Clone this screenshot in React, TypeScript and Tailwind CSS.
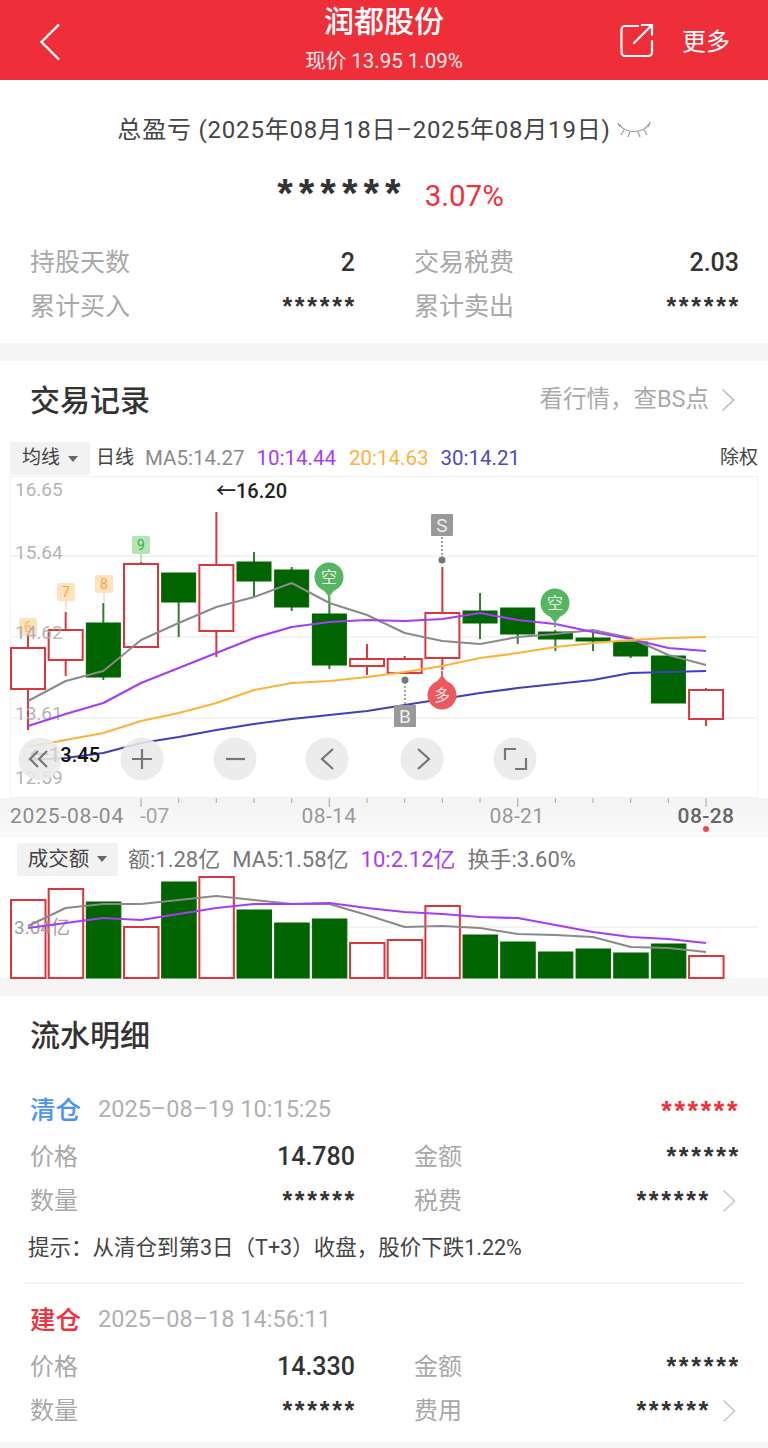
const FONT = { fontFamily: '"Roboto", "Noto Sans CJK SC", sans-serif' }

const RED = "#d9363e"
const GREEN = "#006400"

const candleX = (i: number) => 28 + 37.67 * i

// top, bottom, high, low, rising
const candles: [number, number, number, number, boolean][] = [
  [648, 689, 636, 730, true],
  [630, 660, 612, 676, true],
  [623, 677, 603, 680, false],
  [564, 647, 562, 648, true],
  [573, 602, 573, 637, false],
  [565, 631, 512, 657, true],
  [562, 581, 552, 597, false],
  [570, 607, 567, 611, false],
  [614, 665, 597, 669, false],
  [659, 666, 644, 675, true],
  [659, 673, 656, 673, true],
  [613, 658, 567, 670, true],
  [611, 623, 593, 639, false],
  [608, 634, 608, 644, false],
  [632, 639, 630, 651, false],
  [638, 641, 632, 651, false],
  [642, 656, 642, 658, false],
  [656, 703, 656, 703, false],
  [690, 719, 688, 726, true],
]

const ma5 = [701, 681, 671, 640, 623, 607, 597, 583, 603, 615, 633, 641, 644, 637, 634, 630, 638, 655, 665]
const ma10 = [726, 714, 703, 683, 668, 653, 638, 627, 622, 620, 621, 619, 613, 620, 624, 632, 639, 648, 651]
const ma20 = [747, 740, 733, 721, 713, 703, 690, 683, 681, 677, 672, 666, 658, 653, 647, 643, 640, 638, 637]
const ma30 = [760, 758, 753, 743, 737, 730, 724, 719, 715, 711, 705, 699, 693, 688, 684, 680, 673, 672, 671]

// top of each volume bar, rising days are hollow
const volumes: [number, boolean][] = [
  [899, true], [888, true], [901, false], [926, true], [881, false], [876, true], [909, false],
  [922, false], [918, false], [942, true], [939, true], [905, true], [934, false], [941, false],
  [951, false], [948, false], [952, false], [943, false], [955, true],
]
const volMa5 = [925, 907, 903, 903, 899, 895, 899, 903, 903, 914, 926, 925, 927, 933, 934, 936, 946, 947, 951]
const volMa10 = [927, 922, 917, 919, 913, 907, 903, 903, 902, 907, 911, 913, 916, 917, 924, 931, 936, 938, 942]

const toPoints = (ys: number[]) => ys.map((y, i) => `${candleX(i)},${y}`).join(" ")

function Stars({ className = "text-[#333] text-[25px] tracking-[2.7px]" }: { className?: string }) {
  return (
    <span className={`font-bold leading-none mr-[-2px] -translate-y-[1px] ${className}`} style={{ fontFamily: '"Liberation Sans", sans-serif' }}>
      ******
    </span>
  )
}

function Chevron({ color = "#c8c8c8" }: { color?: string }) {
  return (
    <svg width={14} height={24} viewBox="0 0 14 24" fill="none" stroke={color} strokeWidth={1.6}>
      <path d="M1.5 1.5 L12.5 12 L1.5 22.5" />
    </svg>
  )
}

function Row({ l1, v1, l2, v2, more, labelSize = "text-[25px]" }: { l1: string; v1: React.ReactNode; l2: string; v2: React.ReactNode; more?: boolean; labelSize?: string }) {
  return (
    <div className="grid grid-cols-[325px_325px] gap-x-[59px] h-[44px] items-center px-[30px]">
      <div className="flex items-center justify-between">
        <span className={`${labelSize} text-[#a8a8a8]`}>{l1}</span>
        <span className="text-[25px] font-medium text-[#333]">{v1}</span>
      </div>
      <div className="flex items-center justify-between">
        <span className={`${labelSize} text-[#a8a8a8]`}>{l2}</span>
        <span className="flex items-center">
          <span className="text-[25px] font-medium text-[#333] flex items-center">{v2}</span>
          {more && (
            <span className="ml-[13px] mr-[3px] flex">
              <Chevron />
            </span>
          )}
        </span>
      </div>
    </div>
  )
}

function Tag({ x, y, label, bg, fg }: { x: number; y: number; label: string; bg: string; fg: string }) {
  return (
    <g>
      <line x1={x} x2={x} y1={y + 8} y2={y + 18} stroke={bg} strokeWidth={2} />
      <rect x={x - 9} y={y - 9} width={18} height={18} rx={2} fill={bg} />
      <text x={x} y={y + 5} fontSize={14} textAnchor="middle" fill={fg}>{label}</text>
    </g>
  )
}

function Pin({ x, y, label, bg, tail }: { x: number; y: number; label: string; bg: string; tail: "up" | "down" }) {
  const t = tail === "down" ? 1 : -1
  return (
    <g>
      <path d={`M${x - 7} ${y + t * 11} L${x} ${y + t * 20} L${x + 7} ${y + t * 11} Z`} fill={bg} />
      <line x1={x} x2={x} y1={y + t * 18} y2={y + t * 24} stroke={bg} strokeWidth={2} />
      <circle cx={x} cy={y} r={14.5} fill={bg} />
      <text x={x} y={y + 6} fontSize={16} textAnchor="middle" fill="#fff" fillOpacity={0.9}>{label}</text>
    </g>
  )
}

function Flag({ x, y, label, dotY }: { x: number; y: number; label: string; dotY: number }) {
  return (
    <g>
      <line x1={x} x2={x} y1={y} y2={dotY} stroke="#888" strokeWidth={1.5} strokeDasharray="2 2" />
      <circle cx={x} cy={dotY} r={3.5} fill="#777" />
      <rect x={x - 11} y={y - 11} width={22} height={22} rx={1} fill="#999" />
      <text x={x} y={y + 7} fontSize={19} textAnchor="middle" fill="#eee">{label}</text>
    </g>
  )
}

function KLineChart() {
  const round = "#e9e9e9"
  return (
    <svg width={748} height={322} viewBox="10 476 748 322" className="block" style={FONT}>
      <rect x={10.5} y={476.5} width={747} height={321} fill="#fff" stroke="#f2f2f2" />
      {[556, 637, 718].map((y) => (
        <line key={y} x1={10} x2={758} y1={y} y2={y} stroke="#f0f0f0" strokeWidth={1.5} />
      ))}

      <Tag x={28} y={627} label="6" bg="#fde3c0" fg="#fbb55d" />
      <Tag x={66} y={592} label="7" bg="#fde3c0" fg="#f9a341" />
      <Tag x={104} y={584} label="8" bg="#fde3c0" fg="#f9a341" />
      <Tag x={141} y={545} label="9" bg="#b5e4b9" fg="#3daf4a" />

      {candles.map(([top, bottom, high, low, up], i) => {
        const x = candleX(i)
        const color = up ? RED : GREEN
        return (
          <g key={i}>
            <line x1={x} x2={x} y1={high} y2={low} stroke={up ? RED : "#2f7d2f"} strokeWidth={2} />
            <rect
              x={x - 17}
              y={top}
              width={34}
              height={bottom - top}
              fill={up ? "#fff" : color}
              stroke={color}
              strokeWidth={up ? 2 : 1}
            />
          </g>
        )
      })}

      {/* price scale sits on top of the candles */}
      {[["16.65", 496], ["15.64", 559], ["14.62", 639], ["13.61", 720], ["12.59", 784]].map(([t, y]) => (
        <text key={t} x={15} y={y} fontSize={19} fill="#aaa" fillOpacity={0.9}>{t}</text>
      ))}

      <polyline points={toPoints(ma5)} fill="none" stroke="#8a8a8a" strokeWidth={2} strokeLinejoin="round" />
      <polyline points={toPoints(ma10)} fill="none" stroke="#a63df5" strokeWidth={2.2} strokeLinejoin="round" />
      <polyline points={toPoints(ma20)} fill="none" stroke="#fbb33c" strokeWidth={2.2} strokeLinejoin="round" />
      <polyline points={toPoints(ma30)} fill="none" stroke="#4040bd" strokeWidth={2.2} strokeLinejoin="round" />

      <Pin x={329} y={577} label="空" bg="#55b560" tail="down" />
      <Pin x={555} y={603} label="空" bg="#55b560" tail="down" />
      <Pin x={442} y={695} label="多" bg="#ec5a60" tail="up" />
      <Flag x={442} y={525} label="S" dotY={560} />
      <Flag x={405} y={716} label="B" dotY={680} />

      <text x={216} y={498} fontSize={20} fontWeight={500} fill="#222">←16.20</text>
      <text x={29} y={762} fontSize={20} fontWeight={500} fill="#111">←13.45</text>

      {[40, 142, 235, 327, 422, 515].map((x) => (
        <circle key={x} cx={x} cy={759} r={21.5} fill={round} fillOpacity={0.88} />
      ))}
      <g fill="none" stroke="#777" strokeWidth={2.2}>
        <path d="M38 751 L30 759 L38 767 M47 751 L39 759 L47 767" />
        <path d="M132 759 H152 M142 749 V769" />
        <path d="M226 759 H245" />
        <path d="M333 749 L322 759 L333 769" />
        <path d="M418 749 L429 759 L418 769" />
        <path d="M505 760 V749 H516 M526 758 V769 H515" />
      </g>
    </svg>
  )
}

function DateAxis() {
  return (
    <div className="h-[40px] bg-gradient-to-b from-[#f3f3f3] to-[#fbfbfb]">
      <svg width={768} height={40} viewBox="0 798 768 40" className="block" style={FONT}>
        {candles.slice(3).map((_, i) => {
          const long = i % 5 === 0
          const x = candleX(i + 3)
          return <line key={i} x1={x} x2={x} y1={798} y2={long ? 807 : 803} stroke="#b5b5b5" strokeWidth={1.2} />
        })}
        <text x={10} y={823} fontSize={21} fill="#8c8c8c" letterSpacing={0.8}>2025-08-04</text>
        <text x={140} y={823} fontSize={21} fill="#a6a6a6">-07</text>
        <text x={329} y={823} fontSize={21} fill="#999" textAnchor="middle" letterSpacing={0.4}>08-14</text>
        <text x={517} y={823} fontSize={21} fill="#999" textAnchor="middle" letterSpacing={0.4}>08-21</text>
        <text x={706} y={823} fontSize={21} fontWeight={500} fill="#666" textAnchor="middle" letterSpacing={0.4}>08-28</text>
        <circle cx={706} cy={829} r={3} fill="#f0474e" />
      </svg>
    </div>
  )
}

function VolumeChart() {
  return (
    <svg width={768} height={104} viewBox="0 875 768 104" className="block" style={FONT}>
      <line x1={10} x2={758} y1={926} y2={926} stroke="#f0f0f0" strokeWidth={1.5} />
      {volumes.map(([top, up], i) => (
        <rect
          key={i}
          x={candleX(i) - 17}
          y={top}
          width={34.5}
          height={977 - top}
          fill={up ? "#fff" : GREEN}
          stroke={up ? RED : GREEN}
          strokeWidth={up ? 2 : 1}
        />
      ))}
      <text x={14} y={933} fontSize={19} fill="#a0a0a0">3.04亿</text>
      <polyline points={toPoints(volMa5)} fill="none" stroke="#8a8a8a" strokeWidth={2} strokeLinejoin="round" />
      <polyline points={toPoints(volMa10)} fill="none" stroke="#a63df5" strokeWidth={2.2} strokeLinejoin="round" />
    </svg>
  )
}

function Caret() {
  return <span className="w-0 h-0 border-x-[5px] border-x-transparent border-t-[6px] border-t-[#666] ml-[8px]" />
}

export default function App() {
  return (
    <div className="w-[768px] h-[1448px] bg-[#f5f5f5] overflow-hidden" style={FONT}>
      {/* top bar */}
      <header className="h-[80px] bg-[#ee2f39] flex items-center justify-between text-white relative">
        <svg width={22} height={38} viewBox="0 0 22 38" fill="none" stroke="#fff" strokeWidth={2.4} className="ml-[39px] mt-[3px]">
          <path d="M20 1.5 L2.5 19 L20 36.5" />
        </svg>
        <div className="absolute left-0 right-0 top-0 flex flex-col items-center">
          <span className="text-[30px] leading-[40px] font-medium mt-[2px]">润都股份</span>
          <span className="text-[20.5px] leading-[28px] mt-[5px] opacity-90">现价 13.95 1.09%</span>
        </div>
        <div className="flex items-center mr-[38px] relative">
          <svg width={34} height={36} viewBox="0 0 34 36" fill="none" stroke="#fff" strokeWidth={2.2} strokeLinecap="round" className="mr-[28px] mt-[2px]">
            <path d="M18 3 H5 a3.5 3.5 0 0 0 -3.5 3.5 V29.5 a3.5 3.5 0 0 0 3.5 3.5 H28.5 a3.5 3.5 0 0 0 3.5 -3.5 V18" />
            <path d="M14 20 L31 3 M22 2 H32 V12" />
          </svg>
          <span className="text-[24px] mt-[3px]">更多</span>
        </div>
      </header>

      {/* profit summary */}
      <section className="h-[263px] bg-white pt-[32px]">
        <div className="flex items-center justify-center h-[36px] text-[24px] tracking-[0.8px] text-[#444]">
          <span>总盈亏 (2025年08月18日–2025年08月19日)</span>
          <svg width={34} height={18} viewBox="0 0 34 18" fill="none" stroke="#999" strokeWidth={1.2} className="ml-[6px]">
            <path d="M2 3 C8 13 26 13 32 3" />
            <path d="M7 9 L4 14 M13 11 L11 16 M21 11 L23 16 M27 9 L30 14 M31 6 L33 1 M3 6 L1 2" />
          </svg>
        </div>
        <div className="flex items-baseline justify-center mt-[24px] h-[48px] pl-[13px]">
          <span className="text-[40px] font-bold leading-none tracking-[6px] text-[#333] translate-y-[1px]" style={{ fontFamily: '"Liberation Sans", sans-serif' }}>
            ******
          </span>
          <span className="text-[29.5px] text-[#f0303a] ml-[18px]">3.07%</span>
        </div>
        <div className="mt-[21px]">
          <Row l1="持股天数" v1="2" l2="交易税费" v2="2.03" />
          <Row l1="累计买入" v1={<Stars />} l2="累计卖出" v2={<Stars />} />
        </div>
      </section>

      {/* trade record and chart */}
      <section className="mt-[18px] h-[617px] bg-white">
        <div className="h-[78px] mb-[2px] flex items-center justify-between pl-[30px] pr-[33px]">
          <h2 className="text-[30px] font-medium text-[#333]">交易记录</h2>
          <div className="flex items-center text-[23.5px] text-[#aaa]">
            <span>{"看行情\uFF0C查BS点"}</span>
            <span className="ml-[12px] flex">
              <Chevron color="#bbb" />
            </span>
          </div>
        </div>
        <div className="h-[35px] flex items-center ml-[10px] mr-[10px] text-[19px] text-[#444]">
          <div className="w-[80px] h-[33px] bg-[#f2f2f2] rounded-[2px] flex items-center justify-center">
            <span>均线</span>
            <Caret />
          </div>
          <span className="ml-[6px]">日线</span>
          <span className="ml-[11px] text-[20.5px] text-[#8a8a8a]">MA5:14.27</span>
          <span className="ml-[12px] text-[20.5px] text-[#a63df5]">10:14.44</span>
          <span className="ml-[13px] text-[20.5px] text-[#fbb33c]">20:14.63</span>
          <span className="ml-[12px] text-[20.5px] text-[#4a4ac0]">30:14.21</span>
          <span className="ml-auto">除权</span>
        </div>
        <div className="ml-[10px] w-[748px]">
          <KLineChart />
        </div>
        <DateAxis />
        <div className="h-[38px] pt-[4px] flex items-center pl-[17px] text-[22px] text-[#777]">
          <div className="w-[101px] h-[33px] bg-[#f2f2f2] rounded-[2px] flex items-center justify-center text-[20.5px] text-[#444]">
            <span>成交额</span>
            <Caret />
          </div>
          <span className="ml-[10px]">额:1.28亿</span>
          <span className="ml-[12px]">MA5:1.58亿</span>
          <span className="ml-[12px] text-[#a63df5]">10:2.12亿</span>
          <span className="ml-[12px]">换手:3.60%</span>
        </div>
        <VolumeChart />
      </section>

      {/* transaction list */}
      <section className="mt-[18px] h-[446px] bg-white">
        <h2 className="text-[30px] leading-[80px] font-medium text-[#333] pl-[30px]">流水明细</h2>

        <div className="h-[34px] mt-[17px] flex items-center px-[30px]">
          <span className="text-[25.5px] font-medium text-[#4b94f2]">清仓</span>
          <span className="text-[23.5px] text-[#b0b0b0] ml-[17px]">2025–08–19 10:15:25</span>
          <span className="ml-auto flex items-center pt-[4px]">
            <Stars className="text-[#f0303a] text-[27px] tracking-[2.6px]" />
          </span>
        </div>
        <div className="mt-[8px]">
          <Row l1="价格" v1="14.780" l2="金额" v2={<Stars />} labelSize="text-[24px]" />
          <Row l1="数量" v1={<Stars />} l2="税费" v2={<Stars />} more labelSize="text-[24px]" />
        </div>
        <p className="text-[21.5px] text-[#444] pl-[28px] mt-[9px] leading-[32px]">{"提示\uFF1A从清仓到第3日\uFF08T+3\uFF09收盘\uFF0C股价下跌1.22%"}</p>
        <div className="h-[2px] bg-[#f4f4f4] mx-[25px] mt-[18px]" />

        <div className="h-[34px] mt-[19px] flex items-center px-[30px]">
          <span className="text-[25.5px] font-medium text-[#f0303a]">建仓</span>
          <span className="text-[23.5px] text-[#b0b0b0] ml-[17px]">2025–08–18 14:56:11</span>
        </div>
        <div className="mt-[8px]">
          <Row l1="价格" v1="14.330" l2="金额" v2={<Stars />} labelSize="text-[24px]" />
          <Row l1="数量" v1={<Stars />} l2="费用" v2={<Stars />} more labelSize="text-[24px]" />
        </div>
      </section>
    </div>
  )
}
